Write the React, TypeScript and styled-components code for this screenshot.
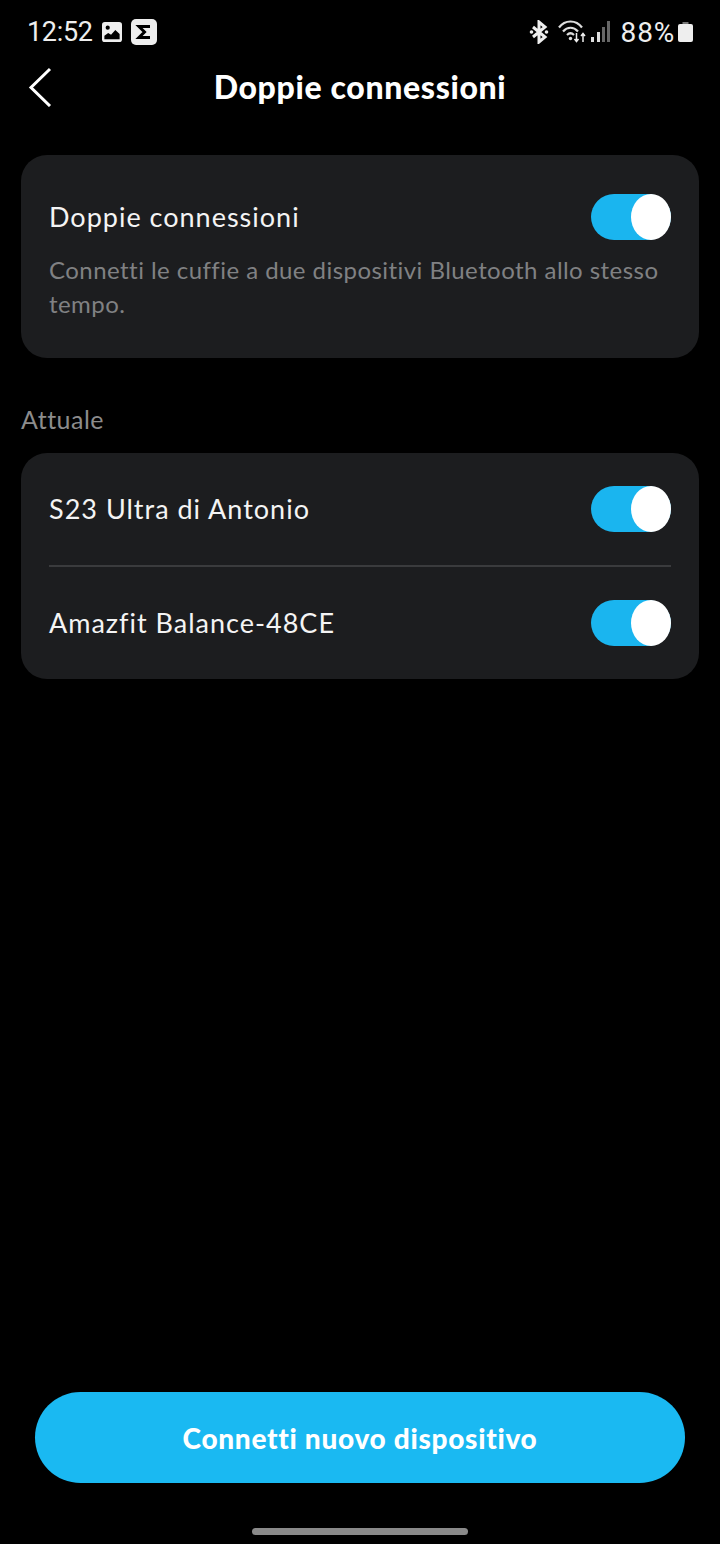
import React from "react";
import styled, { createGlobalStyle } from "styled-components";

const GlobalStyle = createGlobalStyle`
  html, body {
    margin: 0;
    padding: 0;
    background: #000;
  }
`;

const Page = styled.div`
  width: 720px;
  height: 1544px;
  background: #000;
  color: #fff;
  display: flex;
  flex-direction: column;
  font-family: "Lato", "Liberation Sans", sans-serif;
  overflow: hidden;
`;

const StatusBar = styled.div`
  height: 64px;
  padding: 0 27px 0 27px;
  box-sizing: border-box;
  display: flex;
  align-items: center;
  justify-content: space-between;
  font-family: "Roboto", sans-serif;
  font-size: 27px;
  color: #eee;
`;

const StatusGroup = styled.div`
  display: flex;
  align-items: center;
`;

const Time = styled.span`
  margin-right: 9px;
  letter-spacing: -0.3px;
`;

const Percent = styled.span`
  margin: 0 3px 0 10px;
  font-size: 28px;
  letter-spacing: 0.8px;
`;

const Header = styled.header`
  height: 44px;
  margin-bottom: 47px;
  display: flex;
  align-items: center;
  justify-content: center;
  position: relative;
`;

const BackButton = styled.div`
  position: absolute;
  left: 27px;
  top: 3px;
  line-height: 0;
`;

const Title = styled.h1`
  margin: 0;
  font-size: 32px;
  font-weight: 900;
  letter-spacing: 0.65px;
`;

const Card = styled.section`
  margin: 0 21px;
  background: #1c1d1f;
  border-radius: 26px;
`;

const IntroCard = styled(Card)`
  height: 203px;
  box-sizing: border-box;
  padding: 39px 28px 0;
`;

const Row = styled.div`
  display: flex;
  align-items: center;
  justify-content: space-between;
`;

const DeviceRow = styled(Row)`
  height: 112px;
  margin: 0 28px;
  & + & {
    height: 114px;
    border-top: 2px solid #3a3b3d;
    box-sizing: border-box;
  }
`;

const RowLabel = styled.span`
  font-size: 27px;
  line-height: 32px;
  letter-spacing: 1px;
  color: #f4f4f4;
`;

const Description = styled.p`
  margin: 13px 0 0;
  font-size: 24px;
  line-height: 34px;
  letter-spacing: 0.45px;
  color: #808183;
`;

const SectionLabel = styled.div`
  margin: 45px 21px 18px;
  height: 32px;
  line-height: 32px;
  font-size: 25px;
  letter-spacing: 0.5px;
  color: #8c8c8c;
`;

const Track = styled.div<{ $on: boolean }>`
  width: 80px;
  height: 46px;
  border-radius: 23px;
  background: ${(p) => (p.$on ? "#1ab5ef" : "#555")};
  display: flex;
  justify-content: ${(p) => (p.$on ? "flex-end" : "flex-start")};
`;

const Knob = styled.div`
  width: 40px;
  height: 46px;
  border-radius: 50%;
  background: #fff;
`;

const Footer = styled.div`
  margin-top: auto;
  display: flex;
  flex-direction: column;
  align-items: center;
`;

const PrimaryButton = styled.button`
  width: 650px;
  height: 91px;
  border: 0;
  border-radius: 46px;
  background: #1ab9f2;
  color: #fff;
  font-family: inherit;
  font-size: 28px;
  font-weight: 900;
  letter-spacing: 0.7px;
`;

const HomeBar = styled.div`
  width: 216px;
  height: 7px;
  margin: 45px 0 9px;
  border-radius: 4px;
  background: #8a8a8a;
`;

const Toggle = ({ on = true }: { on?: boolean }) => (
  <Track $on={on}>
    <Knob />
  </Track>
);

const GalleryIcon = () => (
  <svg width="20" height="20" viewBox="0 0 21 21" style={{ marginRight: 9 }}>
    <rect width="21" height="21" rx="3" fill="#eee" />
    <circle cx="6" cy="6" r="2.2" fill="#000" />
    <path d="M2.5 18v-3.5l4-3 3 2 4.5-5 4.500 4V18z" fill="#000" />
  </svg>
);

const SigmaIcon = () => (
  <svg width="26" height="26" viewBox="0 0 26 26">
    <rect width="26" height="26" rx="5" fill="#eee" />
    <path d="M19 7.500H8l5.500 5.500L8 18.500h11" fill="none" stroke="#000" strokeWidth="3" />
  </svg>
);

const BluetoothIcon = () => (
  <svg width="20" height="24" viewBox="0 0 20 24" style={{ marginRight: 9 }}>
    <path d="M4 7l12 10-6 5V2l6 5L4 17" fill="none" stroke="#eee" strokeWidth="3" />
    <circle cx="2.500" cy="12" r="1.800" fill="#eee" />
    <circle cx="17.500" cy="12" r="1.800" fill="#eee" />
  </svg>
);

const WifiIcon = () => (
  <svg width="30" height="24" viewBox="0 0 30 24">
    <g fill="none" stroke="#ddd" strokeWidth="2.2">
      <path d="M1 7.500C7-.5 18-.5 24 7.500" />
      <path d="M5 11.500c4.500-5 10.500-5 15 0" />
      <path d="M9 15c2.500-2.500 4.500-2.500 7 0" />
    </g>
    <circle cx="12.500" cy="18.500" r="1.700" fill="#ddd" />
    <path d="M18.500 13v8M16.500 19l2 2.500 2-2.500M25 22v-8M23 16l2-2.500 2 2.500" fill="none" stroke="#eee" strokeWidth="1.500" />
  </svg>
);

const SignalIcon = () => (
  <svg width="20" height="22" viewBox="0 0 20 22" style={{ marginLeft: 3 }}>
    <rect x="0" y="16" width="3" height="5" fill="#ddd" />
    <rect x="6" y="11" width="3" height="10" fill="#ddd" />
    <rect x="11" y="6" width="3" height="15" fill="#666" />
    <rect x="16" y="0" width="3" height="21" fill="#666" />
  </svg>
);

const BatteryIcon = () => (
  <svg width="15" height="20" viewBox="0 0 15 20">
    <path d="M4.500 0h6v2h-6z" fill="#777" />
    <rect y="2" width="15" height="18" rx="2" fill="#eee" />
  </svg>
);

export default function App() {
  return (
    <Page>
      <GlobalStyle />
      <StatusBar>
        <StatusGroup>
          <Time>12:52</Time>
          <GalleryIcon />
          <SigmaIcon />
        </StatusGroup>
        <StatusGroup>
          <BluetoothIcon />
          <WifiIcon />
          <SignalIcon />
          <Percent>88%</Percent>
          <BatteryIcon />
        </StatusGroup>
      </StatusBar>
      <Header>
        <BackButton>
          <svg width="26" height="40" viewBox="0 0 26 40">
            <path d="M23 2L4 20.500 23 39" fill="none" stroke="#fff" strokeWidth="3" />
          </svg>
        </BackButton>
        <Title>Doppie connessioni</Title>
      </Header>
      <IntroCard>
        <Row>
          <RowLabel>Doppie connessioni</RowLabel>
          <Toggle />
        </Row>
        <Description>
          Connetti le cuffie a due dispositivi Bluetooth allo stesso tempo.
        </Description>
      </IntroCard>
      <SectionLabel>Attuale</SectionLabel>
      <Card>
        <DeviceRow>
          <RowLabel>S23 Ultra di Antonio</RowLabel>
          <Toggle />
        </DeviceRow>
        <DeviceRow>
          <RowLabel>Amazfit Balance-48CE</RowLabel>
          <Toggle />
        </DeviceRow>
      </Card>
      <Footer>
        <PrimaryButton>Connetti nuovo dispositivo</PrimaryButton>
        <HomeBar />
      </Footer>
    </Page>
  );
}
